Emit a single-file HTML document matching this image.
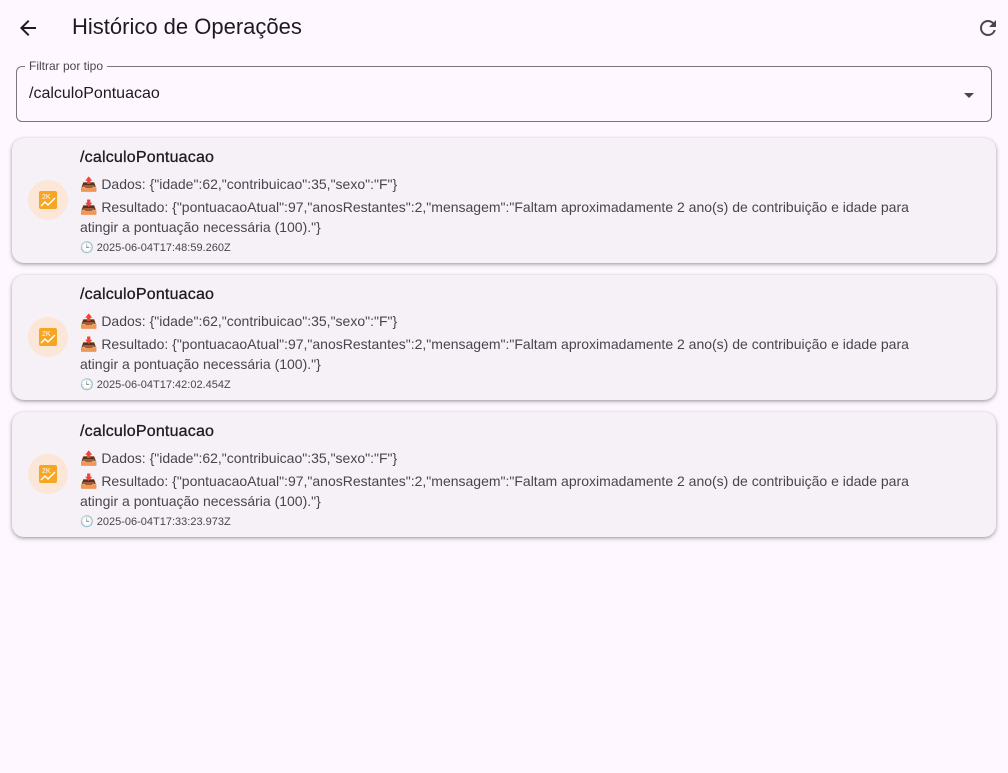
<!DOCTYPE html>
<html><head><meta charset="utf-8"><style>
*{box-sizing:border-box;margin:0;padding:0}
body{width:1008px;height:773px;background:#fef7ff;font-family:"Liberation Sans","Noto Sans CJK SC",sans-serif;color:#1d1b20;position:relative;overflow:hidden}
.title{position:absolute;left:72px;top:14px;font-size:22px;color:#1d1b20}
.field{position:absolute;left:16px;top:66px;width:976px;height:56px;border:1px solid #79747e;border-radius:6px}
.field .lbl{position:absolute;left:8px;top:-8px;background:#fef7ff;padding:0 4px;font-size:12px;color:#49454f}
.field .val{position:absolute;left:12px;top:18px;font-size:16px}
.card{position:absolute;left:12px;width:984px;height:125px;background:#f5f1f7;border-radius:12px;box-shadow:0 1px 3px rgba(0,0,0,.3),0 2px 6px rgba(0,0,0,.12)}
.ic{position:absolute;left:16px;top:42px;width:40px;height:40px;border-radius:50%;background:#fbe6d8}
.ic svg{position:absolute;left:11px;top:11px}
.t{position:absolute;left:68px;top:11px;font-size:16px;color:#1d1b20;letter-spacing:0.2px;-webkit-text-stroke:0.3px #1d1b20}
.b{position:absolute;left:68px;top:36px;font-size:14px;line-height:20px;color:#49454f;width:860px}
.b p{margin-bottom:3px}
.ts{font-size:11px;color:#49454f;margin-top:-2px}
</style></head><body>
<svg style="position:absolute;left:16px;top:16px" width="24" height="24" viewBox="0 0 24 24"><path d="M20 11H7.83l5.59-5.59L12 4l-8 8 8 8 1.41-1.41L7.83 13H20v-2z" fill="#1d1b20"/></svg>
<div class="title">Histórico de Operações</div>
<svg style="position:absolute;left:976px;top:16px" width="24" height="24" viewBox="0 0 24 24"><path d="M17.65 6.35A7.958 7.958 0 0012 4c-4.42 0-7.990 3.58-7.99 8s3.57 8 7.99 8c3.73 0 6.84-2.55 7.730-6h-2.08A5.99 5.99 0 0112 18c-3.31 0-6-2.690-6-6s2.69-6 6-6c1.66 0 3.14.69 4.22 1.78L13 11h7V4l-2.35 2.35z" fill="#49454f"/></svg>
<div class="field"><span class="lbl">Filtrar por tipo</span><span class="val">/calculoPontuacao</span>
<svg style="position:absolute;left:940px;top:16px" width="24" height="24" viewBox="0 0 24 24"><path d="M7 10l5 5 5-5z" fill="#49454f"/></svg></div>

<div class="card" style="top:138px"><div class="ic"><svg width="18" height="18" viewBox="0 0 18 18"><rect width="18" height="18" rx="2" fill="#f6a623"/><path d="M2 15l4-4 3 3 7-7" stroke="#fff" stroke-width="1.5" fill="none"/><text x="3" y="8" font-size="7" fill="#fff" font-family="Liberation Sans">2K</text></svg></div><div class="t">/calculoPontuacao</div><div class="b"><p>📤 Dados: {"idade":62,"contribuicao":35,"sexo":"F"}</p><p>📥 Resultado: {"pontuacaoAtual":97,"anosRestantes":2,"mensagem":"Faltam aproximadamente 2 ano(s) de contribuição e idade para atingir a pontuação necessária (100)."}</p><div class="ts">🕒 2025-06-04T17:48:59.260Z</div></div></div>
<div class="card" style="top:275px"><div class="ic"><svg width="18" height="18" viewBox="0 0 18 18"><rect width="18" height="18" rx="2" fill="#f6a623"/><path d="M2 15l4-4 3 3 7-7" stroke="#fff" stroke-width="1.5" fill="none"/><text x="3" y="8" font-size="7" fill="#fff" font-family="Liberation Sans">2K</text></svg></div><div class="t">/calculoPontuacao</div><div class="b"><p>📤 Dados: {"idade":62,"contribuicao":35,"sexo":"F"}</p><p>📥 Resultado: {"pontuacaoAtual":97,"anosRestantes":2,"mensagem":"Faltam aproximadamente 2 ano(s) de contribuição e idade para atingir a pontuação necessária (100)."}</p><div class="ts">🕒 2025-06-04T17:42:02.454Z</div></div></div>
<div class="card" style="top:412px"><div class="ic"><svg width="18" height="18" viewBox="0 0 18 18"><rect width="18" height="18" rx="2" fill="#f6a623"/><path d="M2 15l4-4 3 3 7-7" stroke="#fff" stroke-width="1.5" fill="none"/><text x="3" y="8" font-size="7" fill="#fff" font-family="Liberation Sans">2K</text></svg></div><div class="t">/calculoPontuacao</div><div class="b"><p>📤 Dados: {"idade":62,"contribuicao":35,"sexo":"F"}</p><p>📥 Resultado: {"pontuacaoAtual":97,"anosRestantes":2,"mensagem":"Faltam aproximadamente 2 ano(s) de contribuição e idade para atingir a pontuação necessária (100)."}</p><div class="ts">🕒 2025-06-04T17:33:23.973Z</div></div></div>
</body></html>
